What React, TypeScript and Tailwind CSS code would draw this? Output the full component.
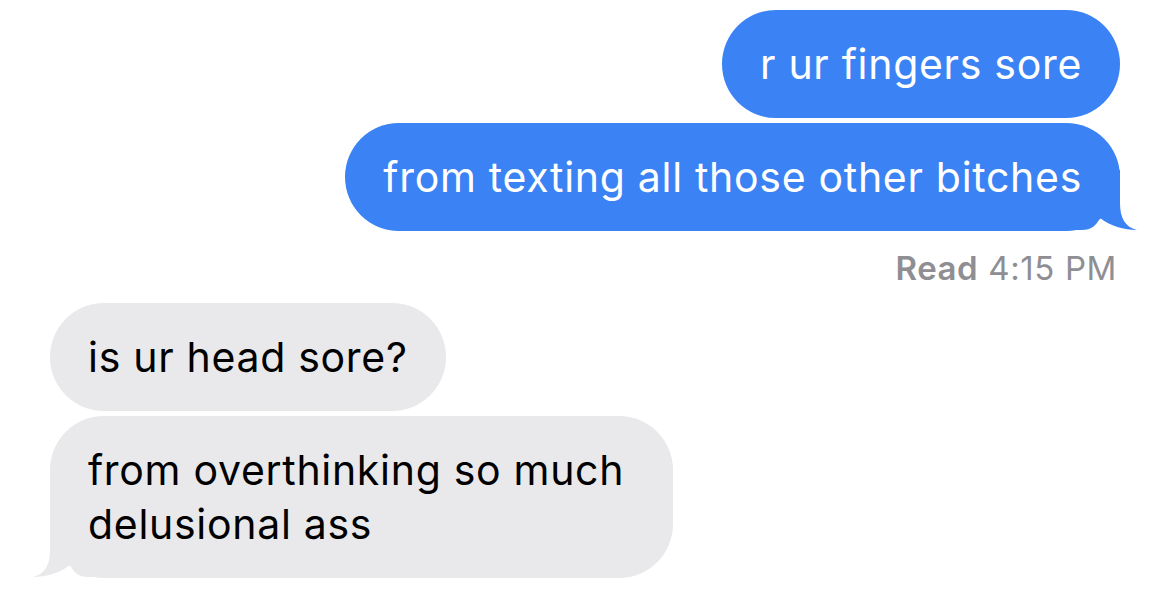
import React from "react";

interface Msg {
  text: string[];
  wide?: boolean;
}

const sent: Msg[] = [
  { text: ["r ur fingers sore"] },
  { text: ["from texting all those other bitches"] },
];

const received: Msg[] = [
  { text: ["is ur head sore?"] },
  { text: ["from overthinking so much", "delusional ass"], wide: true },
];

const Tail = ({ color, flip }: { color: string; flip?: boolean }) => (
  <svg
    width="80"
    height="61"
    viewBox="0 0 80 61"
    className={flip ? "absolute bottom-0 left-[-20px] -scale-x-100" : "absolute bottom-0 right-[-20px]"}
  >
    <path
      d="M0,0 L60,0 L60,33 C60,48 65,57 77,60 C64,60 50,56 40,48 C36,56 31,60 22,60 L0,60 Z"
      fill={color}
    />
  </svg>
);

const Bubble = ({ msg, me, tail }: { msg: Msg; me: boolean; tail: boolean }) => (
  <div
    className={
      "relative rounded-[54px] px-[38px] py-[27px] text-[41px] leading-[54px] tracking-[0.7px] " +
      (me ? "bg-[#3b82f4] text-white" : "bg-[#e9e9eb] text-black") +
      (msg.wide ? " w-[623px]" : "")
    }
  >
    {tail && <Tail color={me ? "#3b82f4" : "#e9e9eb"} flip={!me} />}
    <div className="relative">
      {msg.text.map((line) => (
        <div key={line} className="whitespace-nowrap">
          {line}
        </div>
      ))}
    </div>
  </div>
);

export default function App() {
  return (
    <div
      className="w-[1170px] h-[596px] overflow-hidden bg-white pt-[10px]"
      style={{ fontFamily: "Inter, 'Liberation Sans', sans-serif" }}
    >
      <div className="flex flex-col items-end gap-[5px] pr-[50px]">
        {sent.map((m, i) => (
          <Bubble key={i} msg={m} me tail={i === sent.length - 1} />
        ))}
      </div>
      <div className="flex justify-end pr-[53px] pt-[18px] text-[33px] leading-[38px] tracking-[0.6px] text-[#8e8e93]">
        <span className="font-semibold">Read</span>
        <span className="ml-[10px]">4:15 PM</span>
      </div>
      <div className="flex flex-col items-start gap-[5px] pl-[50px] pt-[16px]">
        {received.map((m, i) => (
          <Bubble key={i} msg={m} me={false} tail={i === received.length - 1} />
        ))}
      </div>
    </div>
  );
}
